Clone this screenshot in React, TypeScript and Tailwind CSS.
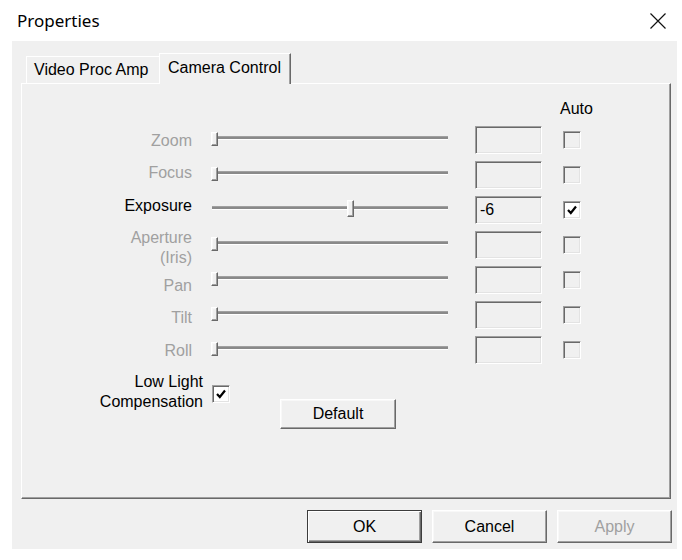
import React from "react";

const SANS = "font-['Liberation_Sans',Arial,sans-serif]";

const sunken =
  "border border-t-[#a0a0a0] border-l-[#a0a0a0] border-b-white border-r-white shadow-[inset_1px_1px_0_#696969,inset_-1px_-1px_0_#e3e3e3]";

const raised =
  "border border-t-white border-l-white border-b-[#696969] border-r-[#696969] shadow-[inset_-1px_-1px_0_#a0a0a0,inset_1px_1px_0_#f8f8f8]";

type Row = {
  label: string[];
  shift: string; // nudges the label the way the original dialog does
  enabled?: boolean;
  value?: string;
  thumb?: number;
  auto?: boolean;
};

const rows: Row[] = [
  { label: ["Zoom"], shift: "mt-[3px]" },
  { label: ["Focus"], shift: "mt-[-3px]" },
  { label: ["Exposure"], shift: "mt-[-7px]", enabled: true, value: "-6", thumb: 135, auto: true },
  { label: ["Aperture", "(Iris)"], shift: "mt-[6px]" },
  { label: ["Pan"], shift: "mt-[13px]" },
  { label: ["Tilt"], shift: "mt-[7px]" },
  { label: ["Roll"], shift: "mt-[3px]" },
];

function Check({ checked, enabled }: { checked?: boolean; enabled?: boolean }) {
  return (
    <div
      className={`w-[18px] h-[18px] flex items-center justify-center ${sunken} ${
        enabled ? "bg-white" : "bg-[#f0f0f0]"
      }`}
    >
      {checked && (
        <svg width="12" height="12" viewBox="0 0 12 12">
          <path d="M2 6 L4.8 9 L10 2.5" fill="none" stroke="#000" strokeWidth="2.2" />
        </svg>
      )}
    </div>
  );
}

function Slider({ enabled, thumb }: { enabled?: boolean; thumb?: number }) {
  return (
    <div className="relative w-[236px] h-[35px] pt-[14px]">
      <div className="h-[4px] bg-[#8a8a8a] border-t border-t-[#a0a0a0] border-b border-b-white" />
      {enabled ? (
        <div
          className={`absolute top-[8px] w-[7px] h-[17px] bg-[#f0f0f0] ${raised}`}
          style={{ left: thumb }}
        />
      ) : (
        <div className={`absolute top-[10px] left-[-1px] w-[7px] h-[14px] bg-[#f0f0f0] ${raised}`} />
      )}
    </div>
  );
}

function Button({ children, main, disabled, className = "" }: { children: React.ReactNode; main?: boolean; disabled?: boolean; className?: string }) {
  return (
    <div
      className={`flex items-center justify-center bg-[#f0f0f0] text-[16px] ${
        main
          ? "border border-[#3c3c3c] shadow-[inset_1px_1px_0_#ffffff,inset_-1px_-1px_0_#696969,inset_-2px_-2px_0_#a0a0a0]"
          : raised
      } ${disabled ? "text-[#a0a0a0]" : "text-black"} ${className}`}
    >
      {children}
    </div>
  );
}

export default function App() {
  return (
    <div className={`w-[682px] h-[560px] bg-white ${SANS} text-[16px] leading-[20px] select-none`}>
      {/* title bar */}
      <div className="h-[41px] flex items-center justify-between pl-[17px] pr-[16px]">
        <span className="font-['Noto_Sans',sans-serif] text-[17px] text-black">Properties</span>
        <svg width="16" height="16" viewBox="0 0 16 16">
          <path d="M0.5 0.5 L15.5 15.5 M15.5 0.5 L0.5 15.5" stroke="#111" strokeWidth="1.2" />
        </svg>
      </div>

      {/* dialog body */}
      <div className="ml-[12px] w-[665px] h-[508px] bg-[#f0f0f0] pl-[9px] flex flex-col">
        {/* tabs */}
        <div className="relative z-10 mt-[12px] ml-[5px] h-[31px] flex items-end">
          <div className="w-[133px] h-[27px] mb-[1px] pl-[7px] flex items-center border-l border-t border-white bg-[#f0f0f0] text-black">
            Video Proc Amp
          </div>
          <div className="w-[132px] h-[31px] pl-[8px] pb-[3px] flex items-center border-l border-t border-white border-r border-r-[#696969] shadow-[inset_-1px_0_0_#a0a0a0] bg-[#f0f0f0] text-black">
            Camera Control
          </div>
        </div>

        {/* panel */}
        <div className="-mt-[1px] w-[650px] h-[416px] border-l border-t border-white border-r border-b border-r-[#696969] border-b-[#696969] shadow-[inset_-1px_-1px_0_#a0a0a0] pt-[12px]">
          <div className="h-[26px] flex items-center pl-[538px] text-black">Auto</div>

          {rows.map((r) => (
            <div key={r.label[0]} className="h-[35px] flex items-center">
              <div
                className={`w-[170px] text-right ${r.enabled ? "text-black" : "text-[#a0a0a0]"} ${r.shift}`}
              >
                {r.label.map((l) => (
                  <div key={l}>{l}</div>
                ))}
              </div>
              <div className="ml-[20px]">
                <Slider enabled={r.enabled} thumb={r.thumb} />
              </div>
              <div className={`ml-[27px] w-[67px] h-[28px] bg-[#f0f0f0] pl-[4px] flex items-center text-black ${sunken}`}>
                {r.value}
              </div>
              <div className="ml-[21px]">
                <Check checked={r.auto} enabled={r.enabled} />
              </div>
            </div>
          ))}

          <div className="mt-[5px] flex items-start">
            <div className="w-[181px] text-right text-black">
              <div>Low Light</div>
              <div>Compensation</div>
            </div>
            <div className="ml-[9px] mt-[13px]">
              <Check checked enabled />
            </div>
            <Button className="ml-[50px] mt-[27px] w-[116px] h-[30px]">Default</Button>
          </div>
        </div>

        {/* buttons */}
        <div className="mt-[11px] pr-[5px] flex justify-end gap-[10px]">
          <Button main className="w-[115px] h-[33px]">OK</Button>
          <Button className="w-[115px] h-[33px]">Cancel</Button>
          <Button disabled className="w-[115px] h-[33px]">Apply</Button>
        </div>
      </div>
    </div>
  );
}
